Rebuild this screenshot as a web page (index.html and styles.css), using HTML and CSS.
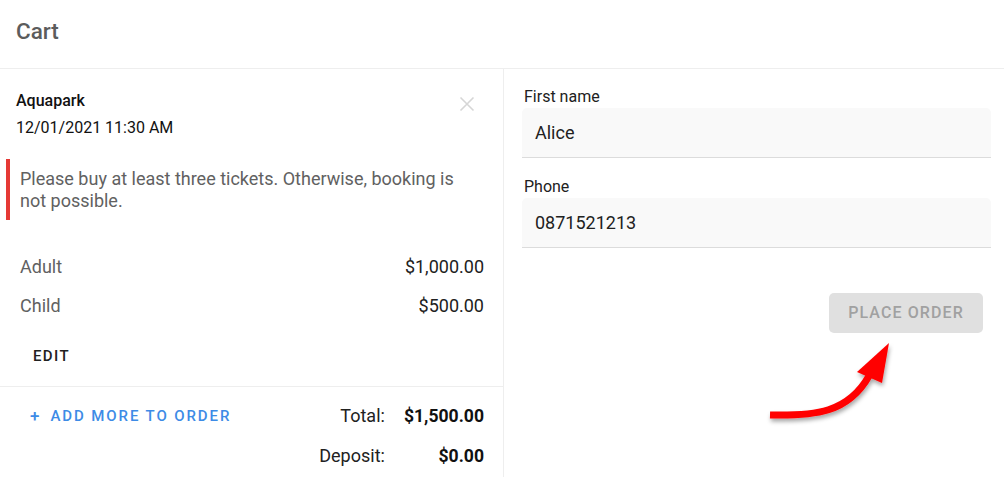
FILE: index.html
```html
<!DOCTYPE html>
<html lang="en">
<head>
<meta charset="utf-8">
<title>Cart</title>
<link rel="stylesheet" href="styles.css">
</head>
<body>
<div class="page">
  <header class="header"><h1 class="title">Cart</h1></header>
  <main class="main">
    <section class="cart">
      <div class="item">
        <div class="item-head">
          <div>
            <div class="item-name">Aquapark</div>
            <div class="item-date">12/01/2021 11:30 AM</div>
          </div>
          <button class="close" aria-label="Remove">
            <svg width="16" height="16" viewBox="0 0 16 16"><path d="M1.5 1.5 L14.5 14.5 M14.5 1.5 L1.5 14.5" stroke="#d6d6d6" stroke-width="1.6" fill="none"/></svg>
          </button>
        </div>
        <div class="warning">Please buy at least three tickets. Otherwise, booking is not possible.</div>
        <div class="lines">
          <div class="line"><span class="line-label">Adult</span><span class="line-price">$1,000.00</span></div>
          <div class="line"><span class="line-label">Child</span><span class="line-price">$500.00</span></div>
        </div>
        <button class="edit">EDIT</button>
      </div>
      <div class="summary">
        <button class="add"><span class="plus">+</span>ADD MORE TO ORDER</button>
        <div class="totals">
          <span class="t-label">Total:</span><span class="t-value">$1,500.00</span>
          <span class="t-label">Deposit:</span><span class="t-value">$0.00</span>
        </div>
      </div>
    </section>
    <section class="form">
      <label class="field">
        <span class="field-label">First name</span>
        <span class="input">Alice</span>
      </label>
      <label class="field">
        <span class="field-label">Phone</span>
        <span class="input">0871521213</span>
      </label>
      <div class="actions"><button class="place">PLACE ORDER</button></div>
    </section>
  </main>
  <svg class="arrow" width="1004" height="477" viewBox="0 0 1004 477">
    <defs>
      <filter id="sh" x="-20%" y="-20%" width="140%" height="140%">
        <feDropShadow dx="1" dy="3" stdDeviation="2" flood-color="#000" flood-opacity="0.35"/>
      </filter>
    </defs>
    <g filter="url(#sh)">
      <path d="M770 415 C 815 416 848 413 869 376" stroke="#ff0000" stroke-width="7" fill="none"/>
      <polygon points="889,343 857,372 882,383" fill="#ff0000"/>
    </g>
  </svg>
</div>
</body>
</html>
```
FILE: styles.css
```css
* { box-sizing: border-box; }
html, body { margin: 0; padding: 0; background: #fff; }
body { font-family: Roboto, "Noto Sans", Arial, sans-serif; color: #212121; }
button { font-family: inherit; border: 0; background: none; padding: 0; cursor: pointer; }

.page { position: relative; width: 1004px; height: 477px; overflow: hidden; }

.header { height: 69px; border-bottom: 1px solid #eeeeee; padding: 17px 16px 0; }
.title { margin: 0; font-size: 22.5px; line-height: 28px; font-weight: 500; color: #5c5c5c; }

.main { display: grid; grid-template-columns: 504px 1fr; height: 408px; }

.cart { border-right: 1px solid #eeeeee; display: flex; flex-direction: column; }
.item { padding: 18px 19px 0 0; border-bottom: 1px solid #eeeeee; height: 318px; }
.item-head { display: flex; justify-content: space-between; align-items: flex-start; padding-left: 16px; }
.item-name { font-size: 16px; font-weight: 500; line-height: 27px; color: #111; }
.item-date { font-size: 16px; line-height: 27px; color: #111; }
.close { width: 16px; height: 16px; margin: 9px 9px 0 0; display: block; }
.close svg { display: block; }

.warning { margin: 18px 20px 0 6px; border-left: 4px solid #e53935; padding: 9px 0 8px 10px; font-size: 18px; line-height: 22px; color: #616161; }

.lines { margin-top: 35px; padding-left: 20px; display: flex; flex-direction: column; gap: 15px; }
.line { display: flex; justify-content: space-between; font-size: 18px; line-height: 24px; }
.line-label { color: #616161; }
.line-price { color: #212121; }

.edit { margin: 26px 0 0 33px; font-size: 15px; font-weight: 500; letter-spacing: 1.4px; line-height: 24px; color: #212121; }

.summary { display: flex; justify-content: space-between; align-items: flex-start; padding: 17px 19px 0 30px; }
.add { font-size: 15px; font-weight: 500; letter-spacing: 1.9px; line-height: 24px; color: #3d8be6; display: flex; align-items: center; }
.plus { font-size: 17px; margin-right: 11px; letter-spacing: 0; }
.totals { display: grid; grid-template-columns: auto auto; column-gap: 19px; row-gap: 16px; font-size: 18px; line-height: 24px; }
.t-label { text-align: right; color: #212121; }
.t-value { text-align: right; font-weight: 700; font-size: 17.6px; color: #111; }

.form { padding: 17px 13px 0 18px; display: flex; flex-direction: column; }
.field { display: flex; flex-direction: column; margin-bottom: 18px; }
.field-label { font-size: 16px; line-height: 21px; color: #212121; margin-left: 2px; margin-bottom: 1px; }
.input { display: block; height: 50px; background: #f9f9f9; border-bottom: 1px solid #dcdcdc; border-radius: 5px 5px 0 0; padding: 0 13px; font-size: 18px; line-height: 49px; color: #212121; }
.actions { display: flex; justify-content: flex-end; margin-top: 27px; padding-right: 8px; }
.place { width: 154px; height: 40px; background: #e0e0e0; border-radius: 5px; font-size: 16px; font-weight: 500; letter-spacing: 1.1px; line-height: 38px; color: #a1a1a1; }

.arrow { position: absolute; left: 0; top: 0; pointer-events: none; }
```
